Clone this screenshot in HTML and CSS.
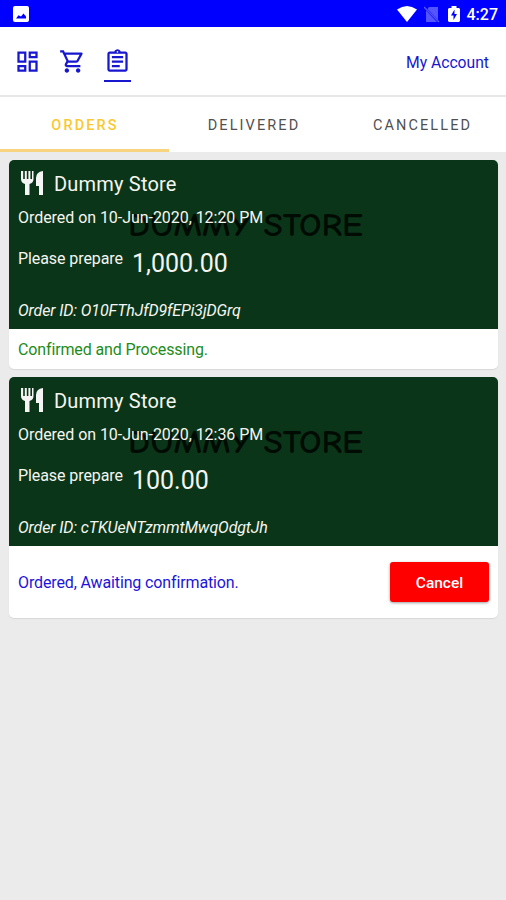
FILE: index.html
```html
<!DOCTYPE html>
<html lang="en">
<head>
<meta charset="utf-8">
<title>Orders</title>
<link rel="stylesheet" href="styles.css">
</head>
<body>
<div class="status-bar">
  <svg class="photo" viewBox="0 0 16 16"><path fill="#fff" fill-rule="evenodd" d="M2 0h12a2 2 0 0 1 2 2v12a2 2 0 0 1-2 2H2a2 2 0 0 1-2-2V2a2 2 0 0 1 2-2zM3 12.500h10v-2l-2.500-3-2.500 3-2.500-1.200z"/></svg>
  <div class="system">
    <svg class="wifi" viewBox="0 0 20 16"><path fill="#fff" d="M0 3.500Q10-3.500 20 3.500L10 16z"/></svg>
    <svg class="sim" viewBox="0 0 16 17"><path fill="#5555ff" d="M5 1h9v13L3.500 3zM2 4.500L13 16H2z"/><path stroke="#5555ff" stroke-width="1.400" d="M0 1l15 15"/></svg>
    <svg class="battery" viewBox="0 0 12 16"><path fill="#fff" fill-rule="evenodd" d="M1 2h2.500V0h5v2H11l1 1v12l-1 1H1l-1-1V3zM6.500 3.500L3 9.500h2.500V14L9 8H6.500z"/></svg>
    <span class="clock">4:27</span>
  </div>
</div>
<header class="header">
  <nav class="nav">
    <a class="nav-item"><svg viewBox="0 0 24 24"><path d="M19 5v2h-4V5h4M9 5v6H5V5h4m10 8v6h-4v-6h4M9 17v2H5v-2h4M21 3h-8v6h8V3zM11 3H3v10h8V3zm10 8h-8v10h8V11zm-10 4H3v6h8v-6z"/></svg></a>
    <a class="nav-item"><svg viewBox="0 0 24 24"><path d="M15.550 13c.75 0 1.410-.41 1.750-1.030l3.580-6.490A.996.996 0 0 0 20.010 4H5.210l-.94-2H1v2h2l3.600 7.590-1.350 2.440C4.520 15.370 5.480 17 7 17h12v-2H7l1.100-2h7.450zM6.160 6h12.150l-2.760 5H8.530L6.160 6zM7 18c-1.100 0-1.990.9-1.990 2S5.900 22 7 22s2-.9 2-2-.9-2-2-2zm10 0c-1.100 0-1.990.9-1.990 2s.89 2 1.990 2 2-.9 2-2-.9-2-2-2z"/></svg></a>
    <a class="nav-item active"><svg viewBox="0 0 24 24"><path d="M7 15h7v2H7zm0-4h10v2H7zm0-4h10v2H7zm12-4h-4.180C14.400 1.840 13.300 1 12 1s-2.400.84-2.820 2H5c-1.100 0-2 .9-2 2v14c0 1.100.9 2 2 2h14c1.100 0 2-.9 2-2V5c0-1.100-.9-2-2-2zm-7-.25c.41 0 .75.34.75.75s-.34.75-.75.75-.75-.34-.75-.75.34-.75.75-.75zM19 19H5V5h14v14z"/></svg></a>
  </nav>
  <a class="account">My Account</a>
</header>
<div class="tabs">
  <div class="tab selected">ORDERS</div>
  <div class="tab">DELIVERED</div>
  <div class="tab">CANCELLED</div>
</div>
<main class="orders">
  <article class="card">
    <div class="summary">
      <svg class="watermark" viewBox="0 0 236 32"><text x="0" y="27" textLength="235" lengthAdjust="spacingAndGlyphs">DUMMY STORE</text></svg>
      <h2 class="store"><svg viewBox="0 0 23 24"><path d="M0 0h2.200v8h1.600V0h2v8h1.600V0h2v8H11V0h1.500v8q0 4-4 5v11H4V13Q0 12 0 8zM22 0v24h-4v-9h-3V7q0-6 7-7z"/></svg><span>Dummy Store</span></h2>
      <p class="date">Ordered on 10-Jun-2020, 12:20 PM</p>
      <div class="prepare"><span class="label">Please prepare</span><span class="amount">1,000.00</span></div>
      <p class="order-id"><span>Order ID: O10FThJfD9fEPi3jDGrq</span></p>
    </div>
    <div class="state confirmed">Confirmed and Processing.</div>
  </article>
  <article class="card">
    <div class="summary">
      <svg class="watermark" viewBox="0 0 236 32"><text x="0" y="27" textLength="235" lengthAdjust="spacingAndGlyphs">DUMMY STORE</text></svg>
      <h2 class="store"><svg viewBox="0 0 23 24"><path d="M0 0h2.200v8h1.600V0h2v8h1.600V0h2v8H11V0h1.500v8q0 4-4 5v11H4V13Q0 12 0 8zM22 0v24h-4v-9h-3V7q0-6 7-7z"/></svg><span>Dummy Store</span></h2>
      <p class="date">Ordered on 10-Jun-2020, 12:36 PM</p>
      <div class="prepare"><span class="label">Please prepare</span><span class="amount">100.00</span></div>
      <p class="order-id"><span>Order ID: cTKUeNTzmmtMwqOdgtJh</span></p>
    </div>
    <div class="state awaiting"><span>Ordered, Awaiting confirmation.</span><button class="cancel">Cancel</button></div>
  </article>
</main>
</body>
</html>
```

FILE: styles.css
```css
* { box-sizing: border-box; }
body { margin: 0; min-height: 900px; background: #ebebeb; font-family: Roboto, sans-serif; font-size: 16px; }
h2, p { margin: 0; font-weight: 400; }
svg { display: block; flex: none; }
.status-bar { height: 27px; background: #00f; display: flex; justify-content: space-between; align-items: center; padding: 1px 8px 0 13px; }
.photo { width: 16px; height: 16px; }
.system { display: flex; align-items: center; }
.wifi { width: 20px; height: 16px; margin-right: 7px; }
.sim { width: 16px; height: 17px; margin-right: 8px; }
.battery { width: 12px; height: 16px; margin-right: 7px; }
.clock { color: #fff; font-size: 16px; font-weight: 500; line-height: 20px; padding-top: 2px; }
.header { height: 70px; background: #fff; border-bottom: 2px solid #e8e8e8; display: flex; justify-content: space-between; align-items: center; padding: 0 17px 0 14px; }
.nav { display: flex; gap: 18px; }
.nav-item { width: 27px; height: 41px; border-bottom: 2px solid transparent; }
.nav-item svg { width: 27px; height: 27px; fill: #1717d0; margin-top: 7px; }
.nav-item.active { border-color: #1717d0; }
.nav { padding-top: 1px; }
.account { color: #1717d0; font-size: 15.700px; padding-top: 2px; }
.tabs { height: 55px; background: #fff; display: grid; grid-template-columns: 169px 169px 168px; }
.tab { display: flex; align-items: center; justify-content: center; padding: 4px 0 0 1px; font-size: 14.500px; letter-spacing: 2.100px; color: #505050; border-bottom: 3px solid transparent; }
.tab.selected { color: #fac832; border-color: #f9d47e; font-weight: 500; }
.orders { padding: 8px 8px 0 9px; display: grid; gap: 8px; }
.card { background: #fff; border-radius: 5px; overflow: hidden; box-shadow: 0 1px 1px #d8d8d8; }
.summary { position: relative; height: 169px; background: #0b3518; color: #f5f5f0; padding: 10px 10px 0 9px; }
.watermark { position: absolute; left: 119px; top: 49px; width: 236px; height: 32px; overflow: visible; }
.watermark text { font-family: "Comic Sans MS", "Comic Neue", "Noto Sans", sans-serif; font-size: 32px; font-weight: 700; fill: #000b03; }
.store, .date, .prepare, .order-id { position: relative; }
.store { display: flex; align-items: center; gap: 10px; height: 28px; padding-left: 3px; font-size: 20px; letter-spacing: 0.200px; }
.store svg { width: 23px; height: 24px; fill: #f5f5f5; margin-top: -3px; }
.date { margin-top: 10px; line-height: 20px; letter-spacing: -0.050px; }
.prepare { display: flex; gap: 9px; margin-top: 18px; height: 36px; }
.label { line-height: 26px; letter-spacing: -0.080px; }
.amount { font-size: 25px; line-height: 36px; letter-spacing: 0; }
.order-id { margin-top: 19px; line-height: 20px; font-style: italic; letter-spacing: -0.130px; }
.state { display: flex; align-items: center; justify-content: space-between; padding: 0 9px; letter-spacing: -0.130px; }
.confirmed { height: 40px; color: #1d8c20; padding-top: 1px; }
.awaiting { height: 72px; color: #1c14dc; padding-top: 1px; }
.cancel { width: 99px; height: 40px; padding: 2px 0 0; margin-bottom: 1px; border: 0; border-radius: 3px; background: #f00; color: #fff; font: 500 15.500px Roboto, sans-serif; box-shadow: 0 1px 3px #9b9b9b; }
```
